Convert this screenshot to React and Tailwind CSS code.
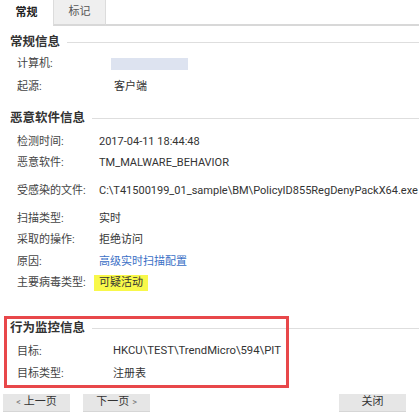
import React from "react";

const font = { fontFamily: 'Roboto, "Noto Sans CJK SC", sans-serif' };

function Heading({ children, className = "" }) {
  return (
    <div className={`flex items-center h-[20px] pl-[10px] ${className}`}>
      <span className="text-[12.5px] font-bold text-[#333] leading-none whitespace-nowrap">{children}</span>
      <div className="flex-1 h-px bg-[#dedede] ml-[7px]" />
    </div>
  );
}

function Row({ label, labelW, h = "h-[21.5px]", children }) {
  return (
    <div className={`flex items-center pl-[17px] ${h}`}>
      <div className={`${labelW} shrink-0 text-[11px] text-[#444] leading-none whitespace-nowrap`}>{label}</div>
      <div className="text-[11px] text-[#333] leading-none whitespace-nowrap">{children}</div>
    </div>
  );
}

function Btn({ children, className = "" }) {
  return (
    <div className={`h-[18px] w-[67px] bg-[#e6e6e6] border-b border-[#d6d6d6] flex items-center justify-center text-[11px] text-[#333] ${className}`}>
      {children}
    </div>
  );
}

export default function App() {
  return (
    <div className="relative w-[419px] h-[418px] bg-white overflow-hidden" style={font}>
      {/* tabs */}
      <div className="flex h-[26px]">
        <div className="w-[53px] flex items-center justify-center text-[11px] font-bold text-[#222]">常规</div>
        <div className="w-[53px] bg-[#efefef] border-l border-r border-[#dcdcdc] border-b-2 border-b-[#d8d8d8] flex items-center justify-center text-[11px] text-[#555]">标记</div>
        <div className="flex-1 border-b-2 border-[#d8d8d8]" />
      </div>

      <Heading className="mt-[6px]">常规信息</Heading>
      <Row label="计算机:" labelW="w-[94px]" h="h-[23px]">
        <div className="w-[77px] h-[12px] bg-[#dde3f0]" />
      </Row>
      <Row label="起源:" labelW="w-[97px]" h="h-[23px]">客户端</Row>

      <Heading className="mt-[10px]">恶意软件信息</Heading>
      <div className="h-[2.25px]" />
      <Row label="检测时间:" labelW="w-[82px]">2017-04-11 18:44:48</Row>
      <Row label="恶意软件:" labelW="w-[82px]">TM_MALWARE_BEHAVIOR</Row>
      <Row label="受感染的文件:" labelW="w-[82px]" h="h-[34px]">
        C:\T41500199_01_sample\BM\PolicyID855RegDenyPackX64.exe
      </Row>
      <Row label="扫描类型:" labelW="w-[82px]">实时</Row>
      <Row label="采取的操作:" labelW="w-[82px]">拒绝访问</Row>
      <Row label="原因:" labelW="w-[82px]"><span className="text-[#3b6fc6]">高级实时扫描配置</span></Row>
      <Row label="主要病毒类型:" labelW="w-[77px]">
        <span className="inline-flex items-center h-[16px] px-[5px] bg-[#f8f84a]">可疑活动</span>
      </Row>

      <Heading className="mt-[24.75px]">行为监控信息</Heading>
      <div className="h-[2px]" />
      <Row label="目标:" labelW="w-[96px]" h="h-[22px]">
        <span className="text-[11.3px]">HKCU\TEST\TrendMicro\594\PIT</span>
      </Row>
      <Row label="目标类型:" labelW="w-[96px]" h="h-[22px]">注册表</Row>

      <div className="flex items-center mt-[10px] pl-[3px]">
        <Btn><span className="text-[#777] text-[9px] mr-[3px]">&lt;</span>上一页</Btn>
        <Btn className="ml-[13px]">下一页<span className="text-[#777] text-[9px] ml-[3px]">&gt;</span></Btn>
        <Btn className="ml-auto mr-[13px]">关闭</Btn>
      </div>

      {/* red annotation box */}
      <div className="absolute left-[4px] top-[316px] w-[285px] h-[72px] border-[3px] border-[#e8474a] pointer-events-none" />
    </div>
  );
}
